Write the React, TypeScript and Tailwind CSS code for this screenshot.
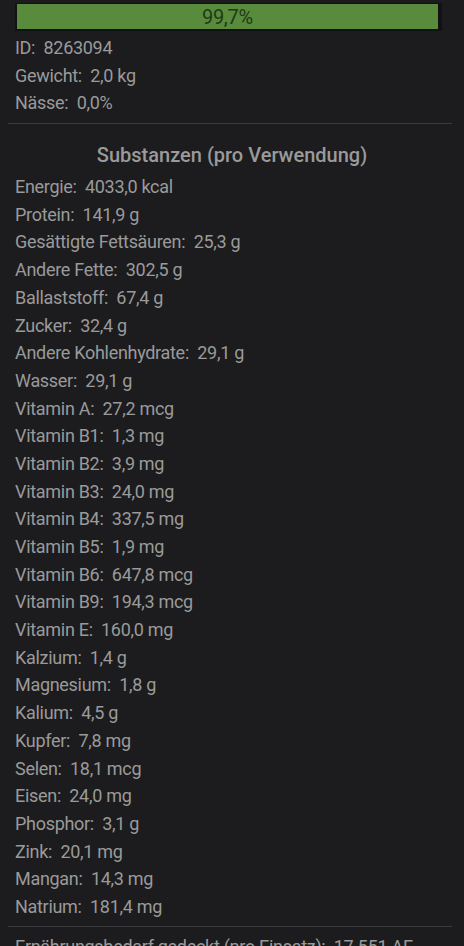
import React from "react";

const rows: [string, string][] = [
  ["Energie", "4033,0 kcal"],
  ["Protein", "141,9 g"],
  ["Gesättigte Fettsäuren", "25,3 g"],
  ["Andere Fette", "302,5 g"],
  ["Ballaststoff", "67,4 g"],
  ["Zucker", "32,4 g"],
  ["Andere Kohlenhydrate", "29,1 g"],
  ["Wasser", "29,1 g"],
  ["Vitamin A", "27,2 mcg"],
  ["Vitamin B1", "1,3 mg"],
  ["Vitamin B2", "3,9 mg"],
  ["Vitamin B3", "24,0 mg"],
  ["Vitamin B4", "337,5 mg"],
  ["Vitamin B5", "1,9 mg"],
  ["Vitamin B6", "647,8 mcg"],
  ["Vitamin B9", "194,3 mcg"],
  ["Vitamin E", "160,0 mg"],
  ["Kalzium", "1,4 g"],
  ["Magnesium", "1,8 g"],
  ["Kalium", "4,5 g"],
  ["Kupfer", "7,8 mg"],
  ["Selen", "18,1 mcg"],
  ["Eisen", "24,0 mg"],
  ["Phosphor", "3,1 g"],
  ["Zink", "20,1 mg"],
  ["Mangan", "14,3 mg"],
  ["Natrium", "181,4 mg"],
];

function Row({ label, value }: { label: string; value: string }) {
  return (
    <div className="h-[27.7px] leading-[27.7px] whitespace-pre tracking-[-0.3px]">
      {label}:{"  "}
      {value}
    </div>
  );
}

export default function App() {
  return (
    <div
      className="min-h-[946px] w-[464px] overflow-hidden bg-[#1c1c1e] text-[18px] text-[#9a9a9a]"
      style={{ fontFamily: "Roboto, 'Liberation Sans', sans-serif" }}
    >
      <div className="pt-[3px] pl-[15px] pr-[22px]">
        <div className="h-[28px] border-t border-l-2 border-b-2 border-r-[3px] border-[#121212] bg-[#121212]">
          <div className="flex h-full w-[99.7%] items-center justify-center bg-[#588c3c] text-[20px] leading-none tracking-[-0.3px] text-[#1f3a16]">
            99,7%
          </div>
        </div>
      </div>
      <div className="mt-[3px] px-[15px]">
        <Row label="ID" value="8263094" />
        <Row label="Gewicht" value="2,0 kg" />
        <Row label="Nässe" value="0,0%" />
      </div>
      <div className="mx-[8px] mt-[6px] mr-[12px] h-px bg-[#3a3a3c]" />
      <div className="h-[49px] pt-[15px] text-center text-[20px] font-medium leading-[32px] text-[#9a9a9a]">
        Substanzen (pro Verwendung)
      </div>
      <div className="px-[15px]">
        {rows.map(([l, v]) => (
          <Row key={l} label={l} value={v} />
        ))}
      </div>
      <div className="mx-[8px] mt-[5px] mr-[12px] h-px bg-[#3a3a3c]" />
      <div className="mt-[6px] px-[15px] leading-[27.7px] whitespace-pre tracking-[-0.3px]">
        Ernährungsbedarf gedeckt (pro Einsatz):{"  "}17.551 AE
      </div>
    </div>
  );
}
